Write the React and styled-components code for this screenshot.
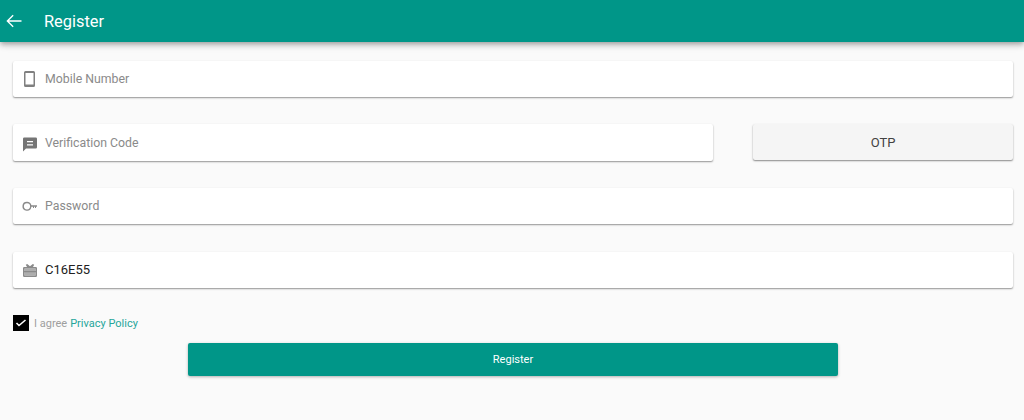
import React from 'react';
import styled, { createGlobalStyle } from 'styled-components';

const GlobalStyle = createGlobalStyle`
  html, body {
    margin: 0;
    padding: 0;
    background: #fafafa;
    font-family: Roboto, "Liberation Sans", Arial, sans-serif;
    overflow: hidden;
  }
`;

const Page = styled.div`
  width: 1024px;
  height: 420px;
  background: #fafafa;
`;

const Toolbar = styled.header`
  display: flex;
  align-items: center;
  height: 42px;
  background: #009688;
  color: #fff;
  box-shadow: 0 2px 4px -1px rgba(0,0,0,.2), 0 4px 5px 0 rgba(0,0,0,.14), 0 1px 10px 0 rgba(0,0,0,.12);
`;

const BackIcon = styled.svg`
  width: 20px;
  height: 20px;
  margin-left: 4px;
  fill: none;
  stroke: #fff;
  stroke-width: 1.6;
`;

const Title = styled.h1`
  margin: 0 0 0 20px;
  font-size: 16.4px;
  font-weight: 400;
`;

const Form = styled.main`
  display: flex;
  flex-direction: column;
  padding: 18.6px 11px 0 13px;
`;

const Row = styled.div`
  display: flex;
  justify-content: space-between;
  margin-bottom: 27.2px;
`;

const Field = styled.div`
  display: flex;
  align-items: center;
  width: ${p => p.$width || 1000}px;
  height: 36.5px;
  background: #fff;
  border-radius: 2px;
  box-shadow: 0 1px 2px rgba(0,0,0,.3), 0 1px 1px rgba(0,0,0,.14);
`;

const FieldIcon = styled.svg`
  flex: none;
  width: 18px;
  height: 18px;
  margin: 0 6px 0 8px;
  fill: ${p => p.$color || '#757575'};
`;

const Value = styled.span`
  font-size: ${p => (p.$filled ? 13 : 12.3)}px;
  color: ${p => (p.$filled ? '#212121' : '#8a8a8a')};
`;

const OtpButton = styled.button`
  width: 260px;
  height: 36px;
  border: 0;
  border-radius: 2px;
  background: #f5f5f5;
  color: #424242;
  font-family: Roboto, sans-serif;
  font-size: 13px;
  box-shadow: 0 1px 2px rgba(0,0,0,.35), 0 1px 1px rgba(0,0,0,.14);
`;

const AgreeRow = styled.label`
  display: flex;
  align-items: center;
  height: 16px;
  font-size: 11px;
  color: #9e9e9e;
`;

const CheckBox = styled.span`
  display: flex;
  width: 16px;
  height: 16px;
  margin-right: 5px;
  background: #000;
`;

const CheckMark = styled.svg`
  width: 16px;
  height: 16px;
  fill: none;
  stroke: #fff;
  stroke-width: 1.6;
`;

const PolicyLink = styled.a`
  margin-left: 3px;
  color: #26a69a;
`;

const SubmitButton = styled.button`
  align-self: center;
  width: 650px;
  height: 33px;
  margin-top: 12px;
  border: 0;
  border-radius: 2px;
  background: #009688;
  color: #fff;
  font-family: Roboto, sans-serif;
  font-size: 11px;
  box-shadow: 0 1px 3px rgba(0,0,0,.3);
`;

export default function App() {
  return (
    <Page>
      <GlobalStyle />
      <Toolbar>
        <BackIcon viewBox="0 0 24 24">
          <path d="M21 12H4M11 5l-7 7 7 7" />
        </BackIcon>
        <Title>Register</Title>
      </Toolbar>
      <Form>
        <Row>
          <Field>
            <FieldIcon viewBox="0 0 18 18" $color="#808080">
              <path fillRule="evenodd" d="M4.500 1h8A1.500 1.500 0 0 1 14 2.500v13a1.500 1.500 0 0 1-1.500 1.500h-8A1.500 1.500 0 0 1 3 15.500v-13A1.500 1.500 0 0 1 4.500 1zM4.500 3v11.500h8V3z" />
            </FieldIcon>
            <Value>Mobile Number</Value>
          </Field>
        </Row>
        <Row>
          <Field $width={700}>
            <FieldIcon viewBox="0 0 18 18">
              <path fillRule="evenodd" d="M3.300 3.500h11.400A1.300 1.300 0 0 1 16 4.800v8.400a1.300 1.300 0 0 1-1.300 1.300H5L2 17.500V4.800a1.300 1.300 0 0 1 1.300-1.300zM6 7v1.300h6V7zm0 3.200v1.300h6v-1.300z" />
            </FieldIcon>
            <Value>Verification Code</Value>
          </Field>
          <OtpButton>OTP</OtpButton>
        </Row>
        <Row>
          <Field>
            <FieldIcon viewBox="0 0 18 18" $color="#8a8a8a">
              <path fillRule="evenodd" d="M6 4.800a4.500 4.500 0 0 1 4.400 3.500H16v1.500h-1v1.200h-1V9.800h-1v1.200h-1V9.800h-1.600A4.500 4.500 0 1 1 6 4.800zm0 1.400a3.100 3.100 0 1 0 0 6.200 3.100 3.100 0 0 0 0-6.200z" />
            </FieldIcon>
            <Value>Password</Value>
          </Field>
        </Row>
        <Row>
          <Field>
            <FieldIcon viewBox="0 0 18 18" $color="#8a8a8a">
              <path fillOpacity=".7" d="M3.500 7.500h11v7h-11z" />
              <path fillRule="evenodd" d="M3.200 6H6L4.800 3.800 6.200 3 9 5.300 11.800 3l1.400.8L12 6h2.800A1.200 1.200 0 0 1 16 7.200v7.600a1.200 1.200 0 0 1-1.200 1.200H3.200A1.200 1.200 0 0 1 2 14.800V7.200A1.200 1.200 0 0 1 3.200 6zm.3 1.400v2.600h11V7.400zm0 3.900v3.300h11v-3.300z" />
            </FieldIcon>
            <Value $filled>C16E55</Value>
          </Field>
        </Row>
        <AgreeRow>
          <CheckBox>
            <CheckMark viewBox="0 0 16 16">
              <path d="M3.500 8l2.500 2.500L12.500 5" />
            </CheckMark>
          </CheckBox>
          I agree
          <PolicyLink>Privacy Policy</PolicyLink>
        </AgreeRow>
        <SubmitButton>Register</SubmitButton>
      </Form>
    </Page>
  );
}
